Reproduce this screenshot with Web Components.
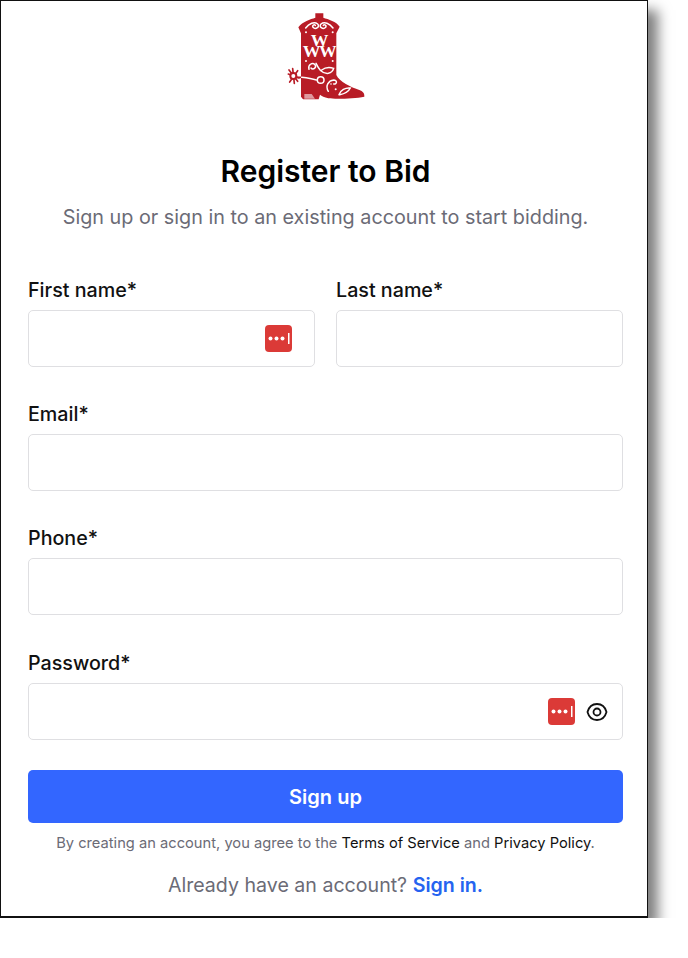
<!DOCTYPE html>
<html>
<head>
<meta charset="utf-8">
<title>Register to Bid</title>
<style>
body { margin: 0; background: #fff; font-family: Inter, "Liberation Sans", sans-serif; }
</style>
</head>
<body>
<bid-window>
    <bid-logo></bid-logo>
    <h-title>Register to Bid</h-title>
    <h-sub>Sign up or sign in to an existing account to start bidding.</h-sub>
    <bid-row>
        <bid-field label="First name*"><key-icon></key-icon></bid-field>
        <bid-field label="Last name*"></bid-field>
    </bid-row>
    <bid-field label="Email*"></bid-field>
    <bid-field label="Phone*"></bid-field>
    <bid-field label="Password*" style="margin-top: 1px"><key-icon></key-icon><eye-icon></eye-icon></bid-field>
    <bid-button>Sign up</bid-button>
    <bid-terms></bid-terms>
    <bid-signin></bid-signin>
</bid-window>
<script>
function define(name, html) {
    customElements.define(name, class extends HTMLElement {
        constructor() {
            super();
            this.attachShadow({ mode: "open" });
            this.shadowRoot.innerHTML = html;
        }
    });
}

define("bid-window", `
    <style>
    :host {
        display: flex;
        flex-direction: column;
        box-sizing: border-box;
        width: 648px;
        height: 918px;
        padding: 0 24px 0 27px;
        background: #fff;
        border: 1px solid #111;
        border-width: 1px 1px 2px 1px;
        box-shadow: 10px 10px 12px rgba(0, 0, 0, 0.5);
    }
    </style>
    <slot></slot>
`);

define("bid-logo", `
    <style>
    :host { display: flex; justify-content: center; height: 110px; margin-top: -1px; margin-bottom: 44px; }
    svg { display: block; width: 110px; height: 110px; }
    text { font-family: "Liberation Serif", serif; font-weight: 700; font-size: 53px; fill: #fff; }
    </style>
    <svg viewBox="0 0 330 330">
        <path fill="#b81c26" d="M133 40H157V53C172 58 196 64 206 80L196 100V225C205 245 240 262 265 270C275 273 281 280 280 290C250 296 195 298 172 295C160 292 152 288 147 284L143 298H96L90 290V100L82 82C95 64 118 58 133 53Z"/>
        <g fill="none" stroke="#b81c26" stroke-width="5" stroke-linecap="round">
            <path d="M92 232H62"/>
            <path d="M65 206L70 250M52 222L84 234M56 246L80 212M54 210L80 244"/>
        </g>
        <circle cx="67" cy="228" r="9" fill="#fff" stroke="#b81c26" stroke-width="6"/>
        <g fill="none" stroke="#fff" stroke-width="4.500" stroke-linecap="round">
            <path d="M104 84C114 70 130 64 140 72C148 80 134 90 126 82C122 76 130 72 133 76"/>
            <path d="M186 84C176 70 160 64 150 72C142 80 156 90 164 82C168 76 160 72 157 76"/>
            <path d="M114 208C110 194 124 186 132 194C138 202 126 212 120 204"/>
            <path d="M135 190C142 204 150 222 172 220C180 218 186 212 188 205C174 200 160 204 152 210"/>
            <path d="M92 232C108 234 122 236 136 240"/>
            <circle cx="149" cy="240" r="10"/>
            <path d="M172 274C162 258 172 242 188 240C200 240 198 254 188 252"/>
            <path d="M206 284C218 282 232 276 238 264C224 262 208 270 204 284"/>
        </g>
        <g fill="#fff">
            <circle cx="105" cy="97" r="3"/><circle cx="185" cy="97" r="3"/>
            <circle cx="105" cy="183" r="3"/><circle cx="185" cy="183" r="3"/>
            <circle cx="194" cy="268" r="3"/><circle cx="180" cy="252" r="2.500"/>
            <text x="119 95 144" y="137 170 170">WWW</text>
        </g>
        <path fill="#fff" opacity="0.55" d="M100 282H122L132 296H100Z"/>
    </svg>
`);

define("h-title", `
    <style>
    :host { display: block; text-align: center; font-size: 30px; line-height: 34px; font-weight: 600; color: #000; }
    </style>
    <slot></slot>
`);

define("h-sub", `
    <style>
    :host { display: block; text-align: center; font-size: 19.800px; line-height: 28px; color: #6b6b76; margin: 15px 0 47px; white-space: nowrap; }
    </style>
    <slot></slot>
`);

define("bid-row", `
    <style>
    :host { display: grid; grid-template-columns: 1fr 1fr; gap: 21px; }
    </style>
    <slot></slot>
`);

class BidField extends HTMLElement {
    constructor() {
        super();
        this.attachShadow({ mode: "open" });
        this.shadowRoot.innerHTML = `
            <style>
            :host { display: block; margin-bottom: 35px; }
            label { display: block; font-size: 19.700px; line-height: 24px; font-weight: 500; color: #111; margin-bottom: 8px; }
            .box {
                display: flex;
                justify-content: flex-end;
                align-items: center;
                gap: 11px;
                box-sizing: border-box;
                height: 57px;
                padding: 0 14px 0 14px;
                border: 1px solid #dfdfe2;
                border-radius: 5px;
                background: #fff;
            }
            </style>
            <label></label>
            <div class="box"><slot></slot></div>
        `;
        this.shadowRoot.querySelector("label").textContent = this.getAttribute("label");
    }
}
customElements.define("bid-field", BidField);

define("key-icon", `
    <style>
    :host { display: block; width: 27px; height: 27px; margin-right: 8px; }
    svg { display: block; }
    </style>
    <svg width="27" height="27" viewBox="0 0 27 27">
        <rect width="27" height="27" rx="4" fill="#db3a37"/>
        <circle cx="5.500" cy="13.500" r="2" fill="#fff"/>
        <circle cx="11.500" cy="13.500" r="2" fill="#fff"/>
        <circle cx="17.500" cy="13.500" r="2" fill="#fff"/>
        <rect x="23" y="8" width="1.500" height="11" fill="#fff"/>
    </svg>
`);

define("eye-icon", `
    <style>
    :host { display: block; width: 22px; height: 22px; margin-left: -8px; }
    svg { display: block; }
    </style>
    <svg width="22" height="22" viewBox="0 0 22 22" fill="none" stroke="#111" stroke-width="1.800">
        <path d="M1.500 11C3 5.500 7 3 11 3S19 5.500 20.500 11C19 16.500 15 19 11 19S3 16.500 1.500 11Z"/>
        <circle cx="11" cy="11" r="3.500"/>
    </svg>
`);

define("bid-button", `
    <style>
    :host {
        display: flex;
        justify-content: center;
        align-items: center;
        height: 53px;
        margin-top: -5px;
        background: #3366ff;
        border-radius: 5px;
        color: #fff;
        font-size: 20px;
        font-weight: 600;
    }
    </style>
    <slot></slot>
`);

define("bid-terms", `
    <style>
    :host { display: block; text-align: center; margin-top: 10px; font-size: 14.700px; line-height: 20px; color: #6b6b76; white-space: nowrap; }
    b { font-weight: 400; color: #111; }
    </style>
    By creating an account, you agree to the <b>Terms of Service</b> and <b>Privacy Policy</b>.
`);

define("bid-signin", `
    <style>
    :host { display: block; text-align: center; margin-top: 19px; font-size: 19.600px; line-height: 26px; color: #6b6b76; }
    a { color: #2563f0; font-weight: 600; text-decoration: none; }
    </style>
    Already have an account? <a href="#">Sign in.</a>
`);
</script>
</body>
</html>
